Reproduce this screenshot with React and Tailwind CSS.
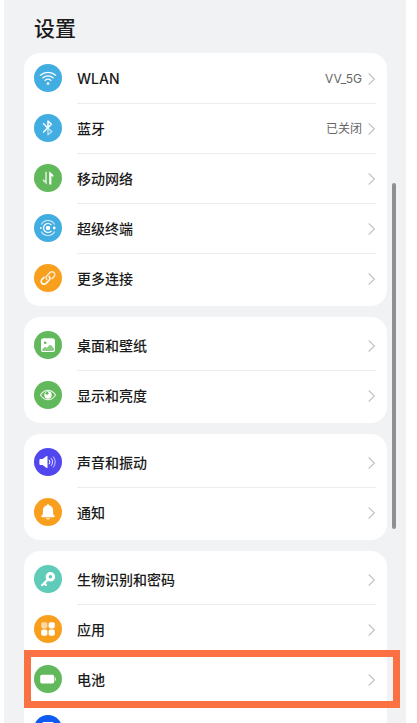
import clsx from 'clsx';

const WifiIcon = () => (
  <g fill="none" stroke="white" strokeWidth="1.3" strokeLinecap="round">
    <path d="M6.4 11.3a11.3 11.3 0 0 1 15.2 0" />
    <path d="M8.7 13.9a8 8 0 0 1 10.6 0" />
    <path d="M11 16.4a4.6 4.6 0 0 1 6 0" />
    <circle cx="14" cy="19.6" r="1.5" fill="white" stroke="none" opacity="0.8" />
  </g>
);

const BluetoothIcon = () => (
  <g fill="none" stroke="white" strokeWidth="1.5" strokeLinecap="round" strokeLinejoin="round">
    <path d="M9.6 18 17.4 10.2 14 7v7.200M9.600 9.800l4.400 4.400" />
    <path d="M14 14.200v6.600l3.800-3.200z" opacity="0.6" />
  </g>
);

const MobileDataIcon = () => (
  <g fill="white">
    <path d="M11.200 7.800h1.600v12.800L8.900 16.900v-1.900l2.300 1.800z" opacity="0.75" />
    <path d="M15.200 20.400V7.300l4.100 3.800v2.100l-1.900-1.400v8.600z" />
  </g>
);

const SuperDeviceIcon = () => (
  <g fill="none" stroke="white" strokeWidth="1.100">
    <path d="M7.400 10.600a7.400 7.400 0 0 1 13.200 0M7.400 17.400a7.400 7.400 0 0 0 13.200 0" opacity="0.8" />
    <path d="M17.400 11a4.500 4.500 0 1 0 0 6" strokeWidth="1.200" />
    <circle cx="14" cy="14" r="2.200" fill="white" stroke="none" />
    <circle cx="6.900" cy="14" r="0.900" fill="white" stroke="none" />
    <circle cx="20.200" cy="14" r="1.400" fill="white" stroke="none" />
  </g>
);

const LinkIcon = () => (
  <g fill="none" stroke="white" strokeWidth="1.500" strokeLinecap="round" strokeLinejoin="round">
    <path d="M12.900 15.400a2.700 2.700 0 0 1 0-3.700l3.100-3.100a2.800 2.800 0 0 1 4 4l-2.100 2.100" opacity="0.75" />
    <path d="M15.100 12.600a2.700 2.700 0 0 1 0 3.700l-3.100 3.100a2.800 2.800 0 0 1-4-4l2.100-2.100" />
  </g>
);

const PictureIcon = () => (
  <>
    <rect x="7" y="7.200" width="14" height="13.800" rx="2.600" fill="white" />
    <circle cx="11.200" cy="11.800" r="1.300" fill="#61b95b" />
    <path d="M8.200 18.400c1.300-2 2.600-3 3.700-2.100.7.5 1.200.6 1.800-.2l1.600-1.800c.7-.7 1.400-.7 2 0l2.600 3.200v1.600q0 .9-.9.900H9.100q-.9 0-.9-.9z" fill="#61b95b" opacity="0.75" />
  </>
);

const EyeIcon = () => (
  <>
    <path d="M6.400 14c1.900-3 4.500-4.700 7.600-4.700s5.700 1.700 7.600 4.700c-1.900 3-4.500 4.700-7.600 4.700S8.300 17 6.400 14z" fill="none" stroke="white" strokeWidth="1.200" opacity="0.8" />
    <circle cx="14" cy="14" r="3.700" fill="white" />
    <circle cx="13" cy="12.300" r="1.500" fill="#61b95b" />
  </>
);

const SoundIcon = () => (
  <>
    <path d="M6.400 11h2.200l4-2.900q.9-.5.9.5v10.800q0 1-.9.500l-4-2.900H6.400q-1-.1-1-1v-4q0-1 1-1z" fill="white" />
    <g fill="none" stroke="white" strokeWidth="1" strokeLinecap="round">
      <path d="M15.300 12.100a3 3 0 0 1 0 3.800" />
      <path d="M17.300 10.400a5.400 5.400 0 0 1 0 7.200" opacity="0.85" />
      <path d="M19.400 8.800a8 8 0 0 1 0 10.400" opacity="0.7" />
    </g>
  </>
);

const BellIcon = () => (
  <g fill="white">
    <path d="M14 6.200a1.200 1.200 0 0 1 1.200 1c2.400.6 3.900 2.600 3.900 5.200v2.800c0 1 .4 1.500 1.200 2.400.8 1 .4 1.700-.6 1.700H8.300c-1 0-1.400-.7-.6-1.700.8-.9 1.200-1.400 1.200-2.400v-2.800c0-2.600 1.500-4.600 3.900-5.200a1.200 1.200 0 0 1 1.200-1z" />
    <path d="M12 20h4c-.2 1-1 1.600-2 1.600s-1.800-.6-2-1.600z" opacity="0.75" />
  </g>
);

const KeyIcon = () => (
  <>
    <path d="m13.600 14.700-5.500 5.500M10.200 18.200l1.700 1.700" fill="none" stroke="white" strokeWidth="2.200" strokeLinecap="round" />
    <circle cx="16.400" cy="11.800" r="3.300" fill="none" stroke="white" strokeWidth="3" />
  </>
);

const AppsIcon = () => (
  <g fill="white">
    <rect x="7.200" y="7.200" width="6.200" height="6.200" rx="1.800" opacity="0.6" />
    <rect x="14.600" y="7.200" width="6.200" height="6.200" rx="1.800" />
    <rect x="7.200" y="14.600" width="6.200" height="6.200" rx="1.800" />
    <rect x="14.600" y="14.600" width="6.200" height="6.200" rx="1.800" />
  </g>
);

const BatteryIcon = () => (
  <g fill="white">
    <rect x="6.200" y="9.800" width="14" height="8.800" rx="1.800" />
    <path d="M20.800 12.300q1.200.2 1.200 1.900t-1.200 1.900z" opacity="0.8" />
  </g>
);

const StorageIcon = () => <rect x="8" y="7" width="12" height="14" rx="2" fill="white" />;

const groups = [
  [
    { id: 'wlan', label: 'WLAN', value: 'VV_5G', color: 'bg-[#41ade1]', Icon: WifiIcon },
    { id: 'bluetooth', label: '蓝牙', value: '已关闭', color: 'bg-[#41ade1]', Icon: BluetoothIcon },
    { id: 'mobile', label: '移动网络', color: 'bg-[#61b95b]', Icon: MobileDataIcon },
    { id: 'super-device', label: '超级终端', color: 'bg-[#41ade1]', Icon: SuperDeviceIcon },
    { id: 'more', label: '更多连接', color: 'bg-[#f99f1e]', Icon: LinkIcon },
  ],
  [
    { id: 'wallpaper', label: '桌面和壁纸', color: 'bg-[#61b95b]', Icon: PictureIcon },
    { id: 'display', label: '显示和亮度', color: 'bg-[#61b95b]', Icon: EyeIcon },
  ],
  [
    { id: 'sound', label: '声音和振动', color: 'bg-[#5247ef]', Icon: SoundIcon },
    { id: 'notifications', label: '通知', color: 'bg-[#f99f1e]', Icon: BellIcon },
  ],
  [
    { id: 'biometrics', label: '生物识别和密码', color: 'bg-[#5eccb9]', Icon: KeyIcon },
    { id: 'apps', label: '应用', color: 'bg-[#f99f1e]', Icon: AppsIcon },
    { id: 'battery', label: '电池', color: 'bg-[#61b95b]', Icon: BatteryIcon, highlighted: true },
    { id: 'storage', label: '存储', color: 'bg-[#0f5af0]', Icon: StorageIcon },
  ],
];

const SettingRow = ({ item, first }) => {
  const { id, label, value, color, Icon, highlighted } = item;
  return (
    <li className="relative">
      <a href={`#${id}`} className="flex h-[50px] items-center pr-[11px] pl-[10px]">
        <span className={clsx('size-7 shrink-0 rounded-full', color)}>
          <svg viewBox="0 0 28 28" className="size-7" aria-hidden="true">
            <Icon />
          </svg>
        </span>
        <span
          className={clsx(
            'ml-[15px] flex h-full min-w-0 flex-1 items-center border-t',
            first ? 'border-transparent' : 'border-[#ebecee]'
          )}
        >
          <span className="flex-1 truncate text-sm font-medium text-[#1a1a1a]">{label}</span>
          {value && <span className="text-xs text-[#666666]">{value}</span>}
          <svg viewBox="0 0 8 12" className="ml-[6px] h-3 w-2" aria-hidden="true">
            <path d="m1 .8 5.400 5.200L1 11.200" fill="none" stroke="#c4c5c7" strokeWidth="1.200" strokeLinecap="round" />
          </svg>
        </span>
      </a>
      {highlighted && (
        <div className="pointer-events-none absolute -inset-y-1 -right-[13px] left-0 z-10 border-[7px] border-[#fb7143]" />
      )}
    </li>
  );
};

const App = () => (
  <div className="h-screen overflow-hidden bg-white pr-[11px] pl-1 font-['Inter','Noto_Sans_CJK_SC',sans-serif]">
    <main className="relative min-h-full bg-[#f1f2f4] pr-[19px] pl-5">
      <header className="flex h-[53px] items-center px-[10px] pt-1">
        <h1 className="text-[21px] font-medium text-[#1a1a1a]">设置</h1>
      </header>
      <div className="space-y-[11px]">
        {groups.map((items, index) => (
          <ul key={items[0].id} className={clsx('rounded-[16px] bg-white pb-[3px]', index > 0 && 'pt-[3px]')}>
            {items.map((item, i) => (
              <SettingRow key={item.id} item={item} first={i === 0} />
            ))}
          </ul>
        ))}
      </div>
      <div className="absolute top-[183px] right-[10px] h-[346px] w-1 rounded-full bg-[#8e9093]" />
    </main>
  </div>
);

export default App;
